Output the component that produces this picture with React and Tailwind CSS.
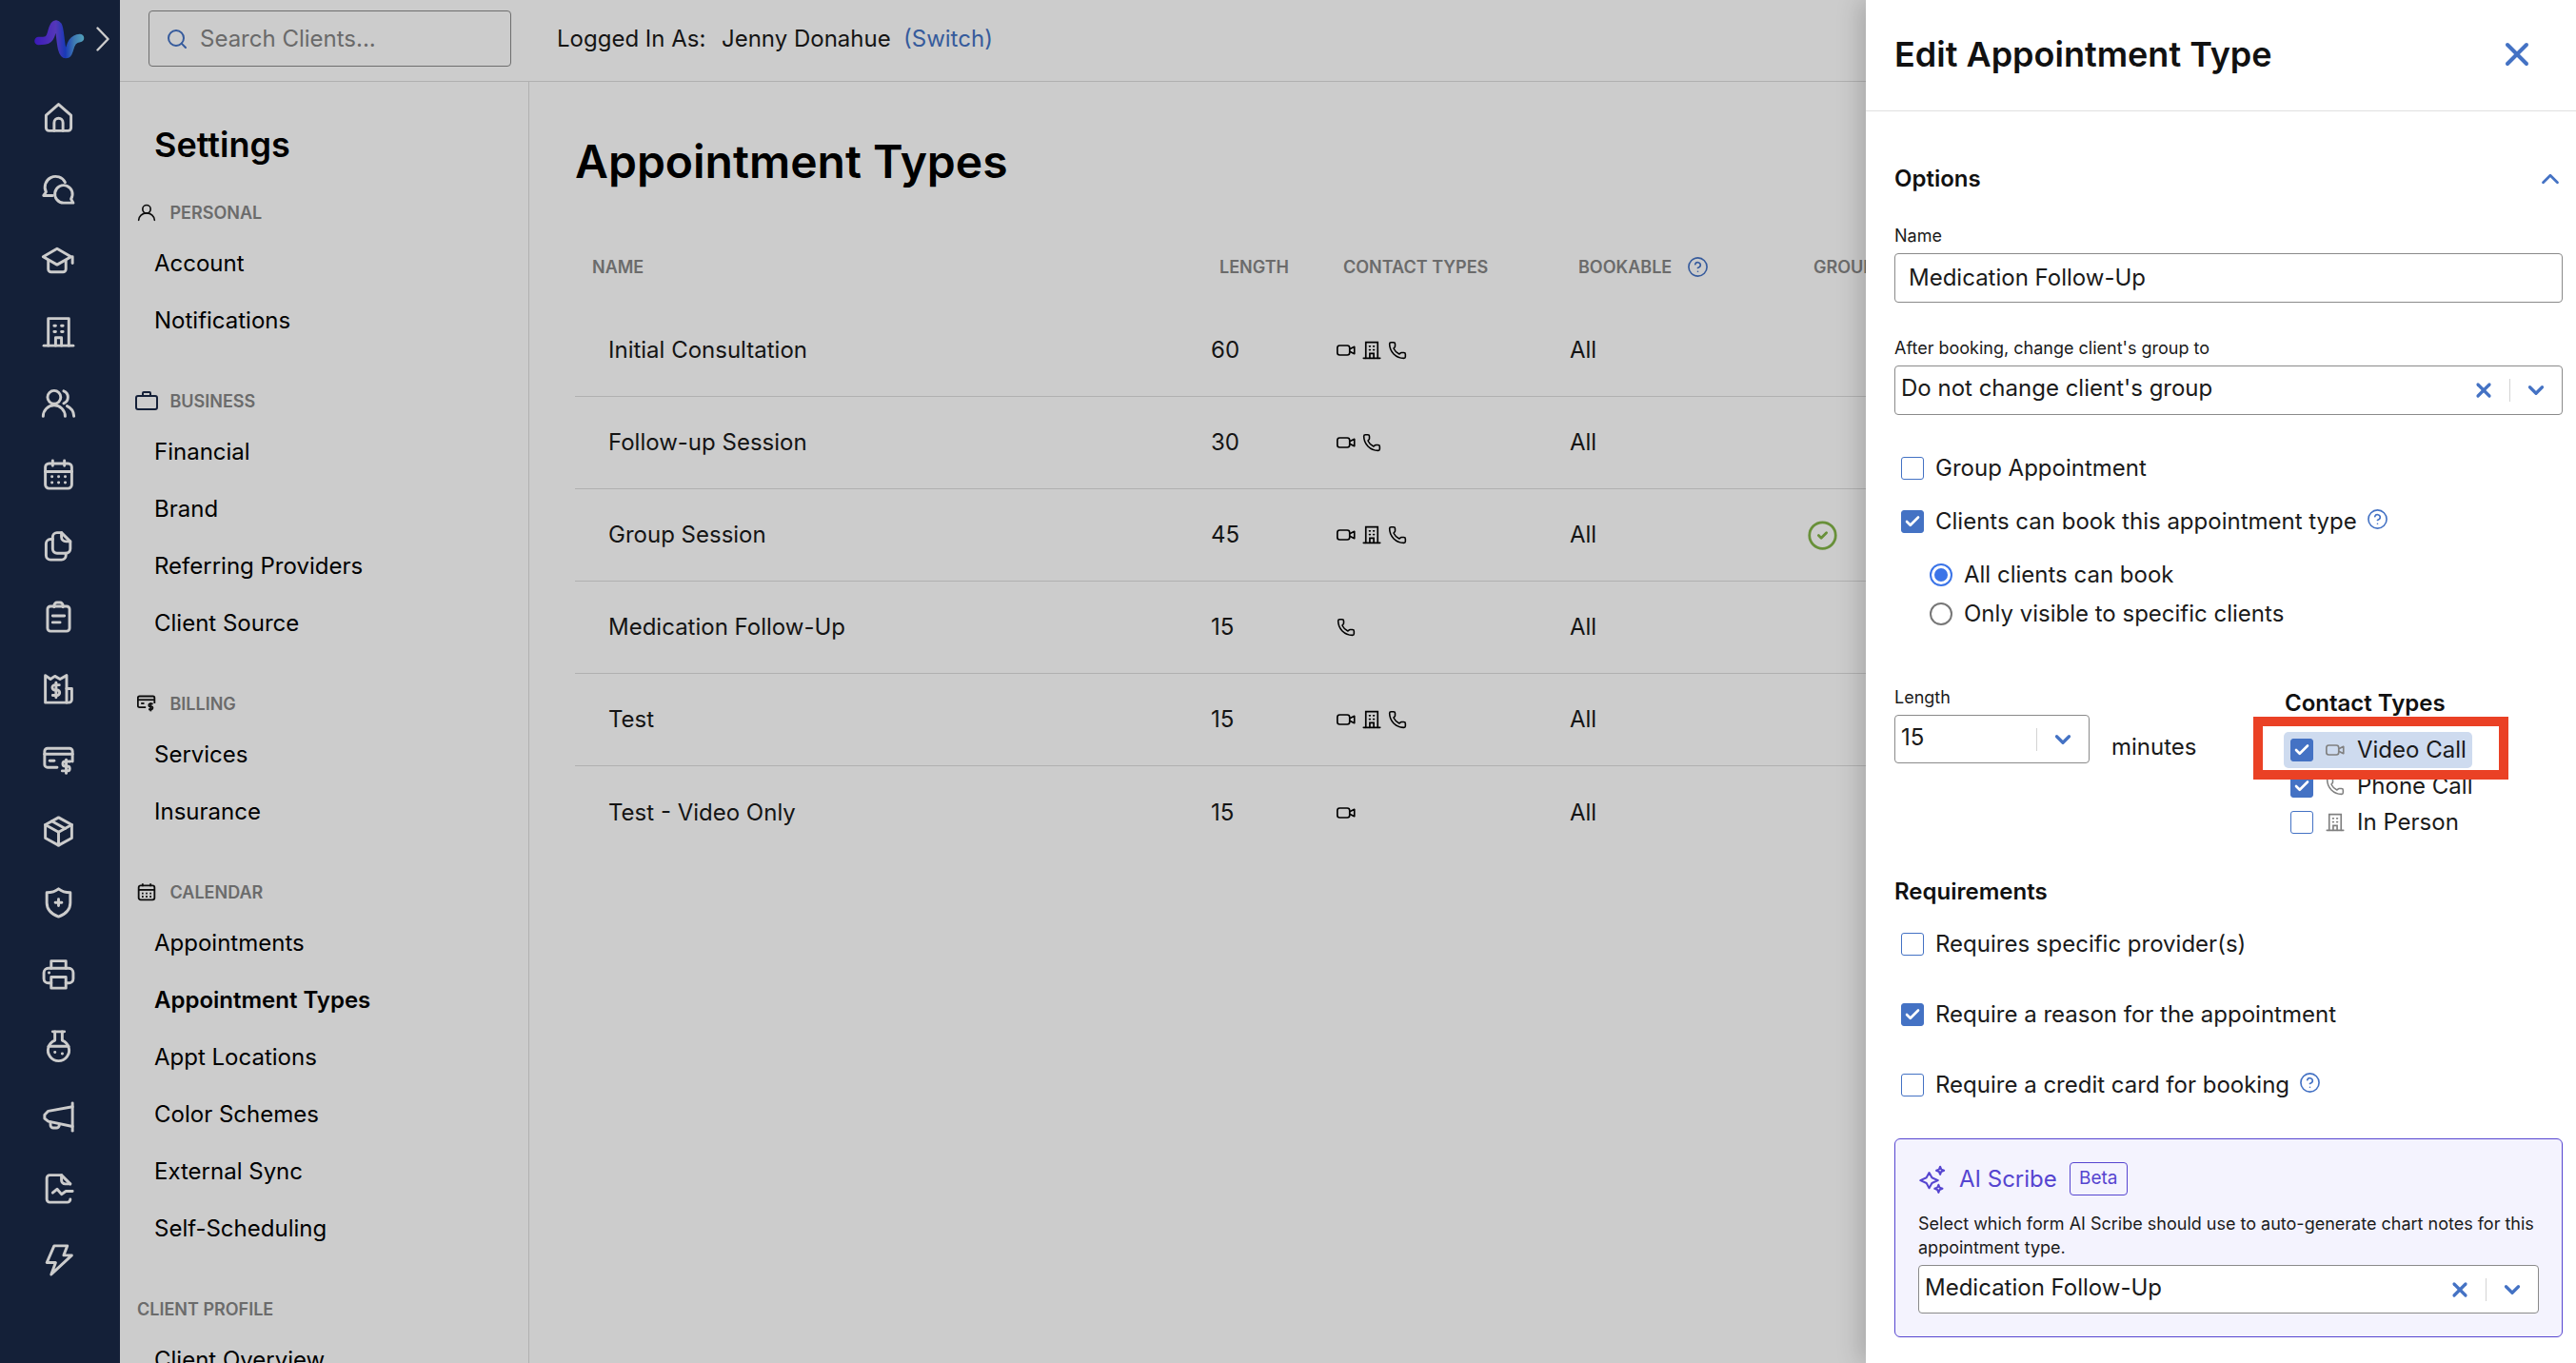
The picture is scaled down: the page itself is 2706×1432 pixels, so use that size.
import React from 'react';
import { Check, ChevronDown, ChevronUp, CircleHelp, CircleCheck, Phone, Search, X } from 'lucide-react';

const Rail = ({ children }) => (
  <div className="flex h-[75px] shrink-0 items-center justify-center pr-[3px]">
    <svg width="37" height="37" viewBox="0 0 24 24" fill="none" stroke="#ffffff" strokeWidth="1.9" strokeLinecap="round" strokeLinejoin="round">
      {children}
    </svg>
  </div>
);

const VideoIcon = ({ className }) => (
  <svg className={className} width="20" height="20" viewBox="0 0 24 24" fill="none" stroke="currentColor" strokeWidth="2" strokeLinejoin="round">
    <rect x="1" y="6" width="15.5" height="12" rx="3" />
    <path d="M16.5 10.5 L22.5 7.5 V16.5 L16.5 13.5" />
  </svg>
);

const BuildingIcon = ({ className }) => (
  <svg className={className} width="20" height="20" viewBox="0 0 24 24" fill="none" stroke="currentColor" strokeWidth="2" strokeLinecap="round">
    <path d="M4.5 22 V2 H19.5 V22" />
    <path d="M1.5 22 H22.5" />
    <path d="M9.5 22 V16 H14.5 V22" />
    <path d="M9 7 H10 M14 7 H15 M9 11.5 H10 M14 11.5 H15" />
  </svg>
);

const PhoneIcon = ({ className }) => <Phone className={className} size={20} strokeWidth={1.9} />;

const HelpIcon = ({ size = 23 }) => <CircleHelp size={size} strokeWidth={1.7} className="text-[#4472c4]" />;

const Box = ({ checked }) => (
  <span className={`flex h-[24px] w-[24px] shrink-0 items-center justify-center rounded-[3px] border ${checked ? 'border-[#4472c4] bg-[#4472c4]' : 'border-[#4472c4] bg-white'}`}>
    {checked && <Check size={18} strokeWidth={3.5} className="text-white" />}
  </span>
);

const CheckRow = ({ checked, label, help, className = '' }) => (
  <div className={`flex h-[24px] items-center gap-[12px] pl-[7px] ${className}`}>
    <Box checked={checked} />
    <span className="text-[24px] leading-[24px] text-[#1a1a1a]">{label}</span>
    {help && <span className="-ml-[2px] -mt-[5px]"><HelpIcon /></span>}
  </div>
);

const Radio = ({ checked, label, className = '' }) => (
  <div className={`flex h-[24px] items-center gap-[12px] pl-[37px] ${className}`}>
    <span className={`flex h-[24px] w-[24px] shrink-0 items-center justify-center rounded-full border-2 bg-white ${checked ? 'border-[#3b74e8]' : 'border-[#777777]'}`}>
      {checked && <span className="h-[14px] w-[14px] rounded-full bg-[#3b74e8]" />}
    </span>
    <span className="text-[24px] leading-[24px] text-[#1a1a1a]">{label}</span>
  </div>
);

const SelectBox = ({ value, clearable, className = '' }) => (
  <div className={`flex items-center rounded-[4px] border border-[#8a8a8a] bg-white pl-[6px] pr-[14px] ${className}`}>
    <span className="flex-1 pb-[4px] text-[24px] leading-[30px] text-[#1a1a1a]">{value}</span>
    {clearable && <X size={24} strokeWidth={3.2} className="text-[#4472c4]" />}
    <span className="ml-[15px] mr-[14px] h-[24px] w-px bg-[#d4d4d4]" />
    <ChevronDown size={26} strokeWidth={3} className="text-[#4472c4]" />
  </div>
);

const NavSection = ({ icon, title, items, className = '' }) => (
  <div className={className}>
    <div className="flex h-[46px] items-center pl-[18px]">
      {icon && <span className="flex w-[34.5px] shrink-0 items-center">{icon}</span>}
      <span className="text-[18px] font-semibold text-[#868686]">{title}</span>
    </div>
    {items.map((item) => (
      <div key={item} className={`flex h-[60px] items-center pl-[36px] pt-[2px] text-[24px] text-black ${item === 'Appointment Types' ? 'font-semibold' : ''}`}>
        {item}
      </div>
    ))}
  </div>
);

const rows = [
  { name: 'Initial Consultation', length: 60, types: ['video', 'building', 'phone'] },
  { name: 'Follow-up Session', length: 30, types: ['video', 'phone'] },
  { name: 'Group Session', length: 45, types: ['video', 'building', 'phone'], group: true },
  { name: 'Medication Follow-Up', length: 15, types: ['phone'] },
  { name: 'Test', length: 15, types: ['video', 'building', 'phone'] },
  { name: 'Test - Video Only', length: 15, types: ['video'] },
];

const typeIcons = { video: VideoIcon, building: BuildingIcon, phone: PhoneIcon };

const navIcon = 'h-[20px] w-[20px] text-[#1a2847]';

export default function App() {
  return (
    <div className="relative flex h-screen w-screen overflow-hidden bg-white text-black [font-family:Inter,sans-serif]">
      {/* icon rail */}
      <div className="flex w-[126px] shrink-0 flex-col bg-[#1a2847]">
        <div className="flex h-[85.5px] shrink-0 items-start pl-[36px] pt-[20px]">
          <svg width="56" height="44" viewBox="0 0 56 44" fill="none">
            <defs>
              <linearGradient id="logoGrad" x1="0" y1="0" x2="56" y2="0" gradientUnits="userSpaceOnUse">
                <stop offset="0" stopColor="#4a1fe8" />
                <stop offset="0.4" stopColor="#6a45e8" />
                <stop offset="0.58" stopColor="#2048e4" />
                <stop offset="0.75" stopColor="#4f9ae0" />
                <stop offset="1" stopColor="#70dcec" />
              </linearGradient>
            </defs>
            <path d="M4.5 23 C12 23 16 23 18 15 C20 7 22 3 25 7 C28 12 27 37 33 37 C39 37 35 21 48 20" stroke="url(#logoGrad)" strokeWidth="8.5" strokeLinecap="round" />
          </svg>
          <svg className="ml-[9px] mt-[8px]" width="14" height="26" viewBox="0 0 14 26" fill="none" stroke="#ffffff" strokeWidth="2.4" strokeLinecap="round" strokeLinejoin="round">
            <path d="M1.5 1.5 L12.5 13 L1.5 24.5" />
          </svg>
        </div>
        <Rail><path d="M3.5 10.5 L12 3 L20.5 10.5 V19 a2 2 0 0 1 -2 2 H5.5 a2 2 0 0 1 -2 -2 Z" /><path d="M9 21 V15.5 a3 3 0 0 1 6 0 V21" /></Rail>
        <Rail><path d="M8 16.5 H1.8 l1.7 -2.4 A7.2 7.2 0 1 1 16.5 7.5" /><path d="M22 21.5 H15.5 a6 6 0 1 1 5 -2.7 Z" /></Rail>
        <Rail><path d="M11 4 L1.5 9.5 L11 15 L20.5 9.5 Z" /><path d="M5 12 v6 a2 2 0 0 0 2 2 h8 a2 2 0 0 0 2 -2 V12" /><path d="M21.5 9.5 V14" /></Rail>
        <Rail><path d="M5 21.5 V3 H19 V21.5" /><path d="M2 21.5 H22" /><path d="M10 21.5 V16 H14 V21.5" /><path d="M9 8 H10 M14 8 H15 M9 12 H10 M14 12 H15" /></Rail>
        <Rail><circle cx="9" cy="8" r="4.5" /><path d="M1.5 21 a7.5 7.5 0 0 1 15 0" /><path d="M15.5 3.8 a4.5 4.5 0 0 1 0 8.4" /><path d="M17.8 14 a8 8 0 0 1 4.7 7" /></Rail>
        <Rail><rect x="3" y="4.5" width="18" height="17" rx="2.5" /><path d="M3 10 H21" /><path d="M8 2.5 V6 M16 2.5 V6" /><path d="M7.5 13.5 H7.6 M12 13.5 H12.1 M16.5 13.5 H16.6 M7.5 17.5 H7.6 M12 17.5 H12.1 M16.5 17.5 H16.6" /></Rail>
        <Rail><path d="M14 3 H11 a3 3 0 0 0 -3 3 V14 a3 3 0 0 0 3 3 H17 a3 3 0 0 0 3 -3 V9 Z" /><path d="M14 3 V6 a3 3 0 0 0 3 3 H20" /><path d="M8 7.5 H6.5 a3 3 0 0 0 -3 3 V18.5 a3 3 0 0 0 3 3 H14 a3 3 0 0 0 3 -3 V17" /></Rail>
        <Rail><rect x="4.5" y="4.5" width="15" height="17" rx="2" /><path d="M9 5 V4 a2 2 0 0 1 2 -2 h2 a2 2 0 0 1 2 2 V5" /><path d="M8 11 H16 M8 15.5 H13" /></Rail>
        <Rail><path d="M17.5 21.5 H3 V3 L6.5 5.5 L9.5 3.5 L13 5.5 L17.5 3 V21.5 Z" /><path d="M17.5 12 H21 V19.5 a2 2 0 0 1 -2 2 H17.5" /><path d="M12.5 9.5 H9.5 a1.5 1.5 0 0 0 0 3.5 H11 a1.5 1.5 0 0 1 0 3.5 H8" /><path d="M10.3 8 V18" /></Rail>
        <Rail><path d="M21.5 13 V6 a2 2 0 0 0 -2 -2 H4.5 a2 2 0 0 0 -2 2 V15 a2 2 0 0 0 2 2 H11" /><path d="M2.5 8 H21.5" /><path d="M6 12.5 H9" /><path d="M20 13 H16.5 a1.4 1.4 0 0 0 0 3.2 H18 a1.4 1.4 0 0 1 0 3.2 H14.5" /><path d="M17.2 11.8 V21" /></Rail>
        <Rail><path d="M12 2.5 L21 7.5 V16.5 L12 21.5 L3 16.5 V7.5 Z" /><path d="M3 7.5 L12 12.5 L21 7.5" /><path d="M12 12.5 V21.5" /><path d="M7.5 5 L16.5 10" /></Rail>
        <Rail><path d="M12 2.5 C14.5 4.5 17 5 20 5 V12 C20 17 16 20 12 21.5 C8 20 4 17 4 12 V5 C7 5 9.5 4.5 12 2.5 Z" /><path d="M12 9.5 V14 M9.8 11.8 H14.2" /></Rail>
        <Rail><path d="M7 8 V3 H17 V8" /><path d="M7 18 H5 a3 3 0 0 1 -3 -3 V11 a3 3 0 0 1 3 -3 H19 a3 3 0 0 1 3 3 V15 a3 3 0 0 1 -3 3 H17" /><rect x="7" y="14" width="10" height="7.5" /><path d="M5.5 11 H5.6" /></Rail>
        <Rail><path d="M8 2.5 H16" /><path d="M9.5 2.5 V8.5 a7.2 7.2 0 1 0 5 0 V2.5" /><path d="M5.2 12.5 H18.8" /><path d="M9.5 16.5 H9.6 M14.5 17.5 H14.6" /></Rail>
        <Rail><path d="M21.5 2.5 V21.5" /><path d="M21.5 5 L5 8 L2.5 10.5 V13 L5 15 L21.5 18.5" /><path d="M6.5 15.5 V17.5 a2 2 0 0 0 2 2 H10.5 a2 2 0 0 0 2 -2" /></Rail>
        <Rail><path d="M20 9 L14 3 H6 a2 2 0 0 0 -2 2 V19.5 a2 2 0 0 0 2 2 H18 a2 2 0 0 0 2 -2" /><path d="M14 3 V6.5 a2.5 2.5 0 0 0 2.5 2.5 H20" /><path d="M8 15 L11 12.5 L14 16 L17 14 H21.5" /></Rail>
        <Rail><path d="M9 2.5 H18 L15.5 9 H21 L7 22 L10 14 H4 Z" /></Rail>
      </div>

      {/* page */}
      <div className="flex min-w-0 flex-1 flex-col">
        <div className="flex h-[86px] shrink-0 items-center border-b border-[#dcdcdc] pb-[4px] pl-[30px]">
          <div className="flex h-[59px] w-[381px] items-center rounded-[4px] border border-[#8a8a8a] pl-[17px]">
            <Search size={24} strokeWidth={2} className="text-[#4472c4]" />
            <span className="ml-[12px] text-[24px] text-[#858585]">Search Clients...</span>
          </div>
          <div className="ml-[48px] flex text-[24px] text-[#1a1a1a]">
            <span className="w-[173px]">Logged In As:</span>
            <span className="w-[191px]">Jenny Donahue</span>
            <span className="text-[#4472c4]">(Switch)</span>
          </div>
        </div>

        <div className="flex min-h-0 flex-1">
          <div className="w-[430px] shrink-0 overflow-hidden border-r border-[#dcdcdc]">
            <div className="h-[114px] pl-[36px] pt-[40px] text-[36px] font-semibold leading-[52px] text-black">Settings</div>
            <NavSection title="PERSONAL" items={['Account', 'Notifications']} icon={
              <svg className={navIcon} viewBox="0 0 24 24" fill="none" stroke="#111111" strokeWidth="2" strokeLinecap="round"><circle cx="12" cy="8" r="5" /><path d="M2 22 a10 9 0 0 1 20 0" /></svg>
            } />
            <NavSection className="mt-[32px]" title="BUSINESS" items={['Financial', 'Brand', 'Referring Providers', 'Client Source']} icon={
              <svg className="h-[22px] w-[24px] -ml-[2px]" viewBox="0 0 24 22" fill="none" stroke="#1a2847" strokeWidth="2"><rect x="1" y="6" width="22" height="14" rx="2" /><path d="M8 6 V3 a1 1 0 0 1 1 -1 h6 a1 1 0 0 1 1 1 V6" /></svg>
            } />
            <NavSection className="mt-[32px]" title="BILLING" items={['Services', 'Insurance']} icon={
              <svg className={navIcon} viewBox="0 0 24 24" fill="none" stroke="#111111" strokeWidth="2.2"><path d="M22 12 V5 a2 2 0 0 0 -2 -2 H3 a2 2 0 0 0 -2 2 V15 a2 2 0 0 0 2 2 H11" /><path d="M1 7.5 H22" /><path d="M5 12 H9" /><path d="M20 12.5 H16.5 a1.4 1.4 0 0 0 0 3.5 H18 a1.4 1.4 0 0 1 0 3.5 H14.5" /><path d="M17.2 11 V22" /></svg>
            } />
            <NavSection className="mt-[32px]" title="CALENDAR" items={['Appointments', 'Appointment Types', 'Appt Locations', 'Color Schemes', 'External Sync', 'Self-Scheduling']} icon={
              <svg className={navIcon} viewBox="0 0 24 24" fill="none" stroke="#111111" strokeWidth="2.2"><rect x="2" y="4" width="20" height="18" rx="2.5" /><path d="M2 9.5 H22" /><path d="M7 1.5 V5 M17 1.5 V5" /><path d="M6 14 H8 M11 14 H13 M16 14 H18 M6 18 H8 M11 18 H13 M16 18 H18" /></svg>
            } />
            <NavSection className="mt-[32px]" title="CLIENT PROFILE" items={['Client Overview']} />
          </div>

          <div className="min-w-0 flex-1 overflow-hidden pl-[48px] pt-[56px]">
            <div className="h-[56px] text-[48px] font-semibold leading-[56px] text-black">Appointment Types</div>
            <div className="mt-[62px] grid h-[40px] w-[1500px] grid-cols-[668px_132px_245px_250px_1fr] items-center text-[18px] font-semibold text-[#868686]">
              <span className="pl-[18px]">NAME</span>
              <span className="pl-[9px]">LENGTH</span>
              <span className="pl-[7px]">CONTACT TYPES</span>
              <span className="flex items-center gap-[16px] pl-[9px]">BOOKABLE <HelpIcon size={23} /></span>
              <span className="pl-[6px]">GROUP</span>
            </div>
            <div className="mt-[20px] w-[1500px]">
              {rows.map((row, i) => (
                <div key={row.name} className={`grid h-[97px] grid-cols-[668px_132px_245px_250px_1fr] items-center text-[24px] text-[#1a1a1a] ${i < rows.length - 1 ? 'border-b border-[#dcdcdc]' : ''}`}>
                  <span className="pl-[35px]">{row.name}</span>
                  <span>{row.length}</span>
                  <span className="flex gap-[7px]">
                    {row.types.map((t) => {
                      const Icon = typeIcons[t];
                      return <Icon key={t} className="text-black" />;
                    })}
                  </span>
                  <span>All</span>
                  <span>{row.group && <CircleCheck size={33} strokeWidth={2} className="-ml-[1px] text-[#82b548]" />}</span>
                </div>
              ))}
            </div>
          </div>
        </div>
      </div>

      {/* dim overlay */}
      <div className="absolute inset-0 bg-black/20" />

      {/* edit drawer */}
      <div className="absolute inset-y-0 right-0 w-[746px] overflow-hidden bg-white shadow-[-6px_0_24px_rgba(0,0,0,0.18)]">
        <div className="flex h-[117px] items-center justify-between border-b border-[#e0e0e0] pb-[3px] pl-[30px] pr-[42px]">
          <span className="text-[36px] font-semibold text-[#111111]">Edit Appointment Type</span>
          <X size={40} strokeWidth={2.4} className="text-[#4472c4]" />
        </div>

        <div className="pl-[30px] pr-[14px]">
          <div className="mt-[51px] flex h-[40px] items-center justify-between">
            <span className="text-[24px] font-semibold text-[#111111]">Options</span>
            <ChevronUp size={30} strokeWidth={2.2} className="-mr-[2px] text-[#4472c4]" />
          </div>

          <div className="mt-[28px] h-[24px] text-[18px] leading-[24px] text-[#1a1a1a]">Name</div>
          <div className="mt-[6px] flex h-[52px] items-center rounded-[4px] border border-[#8a8a8a] pl-[14px] text-[24px] text-[#1a1a1a]">Medication Follow-Up</div>

          <div className="mt-[36px] h-[24px] text-[18px] leading-[24px] text-[#1a1a1a]">After booking, change client's group to</div>
          <SelectBox className="mt-[6px] h-[52px]" value="Do not change client's group" clearable />

          <CheckRow className="mt-[44px]" label="Group Appointment" />
          <CheckRow className="mt-[32px]" checked label="Clients can book this appointment type" help />
          <Radio className="mt-[32px]" checked label="All clients can book" />
          <Radio className="mt-[17px]" label="Only visible to specific clients" />

          <div className="mt-[64px] grid h-[162px] grid-cols-[228px_181px_1fr]">
            <div>
              <div className="h-[24px] text-[18px] leading-[24px] text-[#1a1a1a]">Length</div>
              <SelectBox className="mt-[6px] h-[51px] w-[205px]" value="15" />
            </div>
            <div className="pt-[48px] text-[24px] leading-[32px] text-[#1a1a1a]">minutes</div>
            <div className="relative">
              <div className="mt-[4px] h-[28px] pl-[1px] text-[24px] font-semibold leading-[28px] text-[#111111]">Contact Types</div>
              <div className="mt-[16px] flex h-[38px] w-[198px] items-center rounded-[5px] bg-[#cedbef] pl-[7px]">
                <Box checked />
                <VideoIcon className="ml-[13px] text-[#808080]" />
                <span className="ml-[13px] text-[24px] text-[#1a1a1a]">Video Call</span>
              </div>
              <div className="flex h-[38px] items-center pl-[7px]">
                <Box checked />
                <PhoneIcon className="ml-[13px] text-[#808080]" />
                <span className="ml-[13px] text-[24px] text-[#1a1a1a]">Phone Call</span>
              </div>
              <div className="flex h-[38px] items-center pl-[7px]">
                <Box />
                <BuildingIcon className="ml-[13px] text-[#808080]" />
                <span className="ml-[13px] text-[24px] text-[#1a1a1a]">In Person</span>
              </div>
              {/* red annotation */}
              <div className="absolute left-[-32px] top-[32px] h-[66px] w-[268px] border-[10px] border-[#ea4125]" />
            </div>
          </div>

          <div className="mt-[38px] h-[32px] text-[24px] font-semibold leading-[32px] text-[#111111]">Requirements</div>
          <CheckRow className="mt-[27px]" label="Requires specific provider(s)" />
          <CheckRow className="mt-[50px]" checked label="Require a reason for the appointment" />
          <CheckRow className="mt-[50px]" label="Require a credit card for booking" help />

          <div className="mt-[44px] h-[209px] rounded-[6px] border border-[#5645d0] bg-[#f4f3fe] px-[24px] pt-[24px]">
            <div className="flex h-[35px] items-center">
              <svg width="30" height="30" viewBox="0 0 26 26" fill="none" stroke="#5645d0" strokeWidth="1.8" strokeLinejoin="round">
                <path d="M10 7 L12.5 11.5 L18 14 L12.5 16.5 L10 21 L7.5 16.5 L2 14 L7.5 11.5 Z" />
                <path d="M20 1.5 L21 4 L23.5 5 L21 6 L20 8.5 L19 6 L16.5 5 L19 4 Z" />
                <path d="M18.5 18 L19.5 20.5 L22 21.5 L19.5 22.5 L18.5 25 L17.5 22.5 L15 21.5 L17.5 20.5 Z" />
              </svg>
              <span className="ml-[13px] text-[24px] text-[#5645d0]">AI Scribe</span>
              <span className="ml-[13px] flex h-[35px] w-[61px] items-center justify-center rounded-[4px] border border-[#5645d0] text-[19px] text-[#5645d0]">Beta</span>
            </div>
            <div className="mt-[18px] text-[18px] leading-[24.5px] text-[#1a1a1a]">Select which form AI Scribe should use to auto-generate chart notes for this appointment type.</div>
            <SelectBox className="mt-[6px] h-[51px]" value="Medication Follow-Up" clearable />
          </div>
        </div>
      </div>
    </div>
  );
}
